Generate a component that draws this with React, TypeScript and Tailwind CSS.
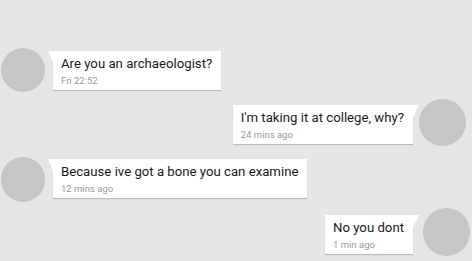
import { JSX } from "react";

type Msg = {
  text: string;
  time: string;
  mine: boolean;
  rowClass: string;
  bubbleTop: string;
  avatarClass: string;
};

const messages: Msg[] = [
  {
    text: "Are you an archaeologist?",
    time: "Fri 22:52",
    mine: false,
    rowClass: "mt-[48px]",
    bubbleTop: "mt-[3px]",
    avatarClass: "ml-px h-[44px] w-[44px]",
  },
  {
    text: "I'm taking it at college, why?",
    time: "24 mins ago",
    mine: true,
    rowClass: "mt-[7px]",
    bubbleTop: "mt-[6px]",
    avatarClass: "ml-[6px] mr-[6px] h-[47px] w-[47px]",
  },
  {
    text: "Because ive got a bone you can examine",
    time: "12 mins ago",
    mine: false,
    rowClass: "mt-[11px]",
    bubbleTop: "mt-[2px]",
    avatarClass: "ml-px h-[45px] w-[44px]",
  },
  {
    text: "No you dont",
    time: "1 min ago",
    mine: true,
    rowClass: "mt-[6px]",
    bubbleTop: "mt-[7px]",
    avatarClass: "ml-[10px] mr-[2px] h-[48px] w-[47px]",
  },
];

const Bubble = ({ m }: { m: Msg }): JSX.Element => (
  <div
    className={`relative ${m.bubbleTop} bg-white pl-2 pr-[9px] pt-[5px] pb-[3px] shadow-[0_1px_1px_rgba(0,0,0,0.18)]`}
  >
    {m.mine ? (
      <span className="absolute top-0 -right-[6px] h-[12px] w-[6px] bg-white [clip-path:polygon(0_0,100%_0,0_100%)]" />
    ) : (
      <span className="absolute top-0 -left-[5px] h-[12px] w-[5px] bg-white [clip-path:polygon(0_0,100%_0,100%_100%)]" />
    )}
    <p className="text-[13.2px] leading-4 text-[#1a1a1a]">{m.text}</p>
    <p className="mt-[2px] text-[9.5px] leading-[13px] text-[#999999]">{m.time}</p>
  </div>
);

export default function App(): JSX.Element {
  return (
    <div className="h-[261px] w-[472px] overflow-hidden bg-[#e6e6e6] font-['Roboto',sans-serif]">
      {messages.map((m) => (
        <div
          key={m.time}
          className={`flex items-start ${m.rowClass} ${m.mine ? "justify-end" : "justify-start"}`}
        >
          {!m.mine && (
            <>
              <div className={`shrink-0 rounded-full bg-[#c6c6c6] ${m.avatarClass}`} />
              <div className="ml-[8px]">
                <Bubble m={m} />
              </div>
            </>
          )}
          {m.mine && (
            <>
              <Bubble m={m} />
              <div className={`shrink-0 rounded-full bg-[#c6c6c6] ${m.avatarClass}`} />
            </>
          )}
        </div>
      ))}
    </div>
  );
}
